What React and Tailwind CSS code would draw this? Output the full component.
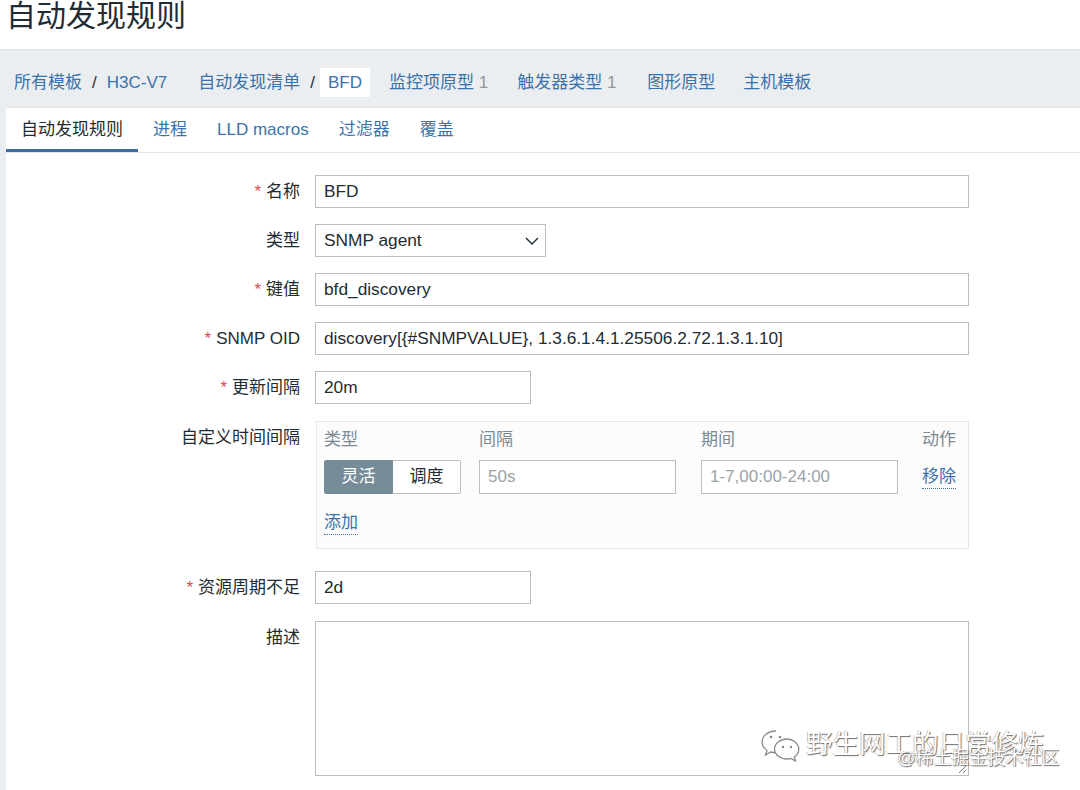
const labelW = "w-[309px] shrink-0 text-right h-[33px] leading-[33px] pr-[15px] text-[#1f2c33]";
const inputBox = "h-[33px] border border-[#bdbdbd] bg-white pl-[8px] flex items-center text-[#1f2c33] text-[17.3px]";

function Req() {
  return <span className="text-[#d64e4e] mr-[5px]">*</span>;
}

function Row({ label, req, children, className = "" }) {
  return (
    <div className={`flex items-start ${className}`}>
      <div className={labelW}>
        {req && <Req />}
        {label}
      </div>
      {children}
    </div>
  );
}

function Sep({ className = "mx-[10px]" }) {
  return <span className={`text-[#1f2c33] ${className}`}>/</span>;
}

function Watermark() {
  return (
    <div className="absolute left-[760px] top-[726px] w-[320px] h-[50px] pointer-events-none">
      <svg className="absolute left-0 top-[2px]" width="42" height="34" viewBox="0 0 42 34">
        <path d="M16 3c-8 0-14 5-14 11 0 3.5 2 6.5 5 8.5l-1.5 4.5 5.5-3c1.5.4 3 .6 5 .6" fill="white" stroke="#8a8a8a" strokeWidth="1.3" />
        <path d="M27 11c-7 0-12.5 4.5-12.5 10s5.5 10 12.5 10c1.4 0 2.7-.2 4-.6l4.5 2.6-1.2-4c2.8-1.8 4.5-4.6 4.5-8 0-5.5-5.8-10-11.8-10z" fill="white" stroke="#8a8a8a" strokeWidth="1.3" />
        <circle cx="11" cy="9" r="1.3" fill="#8a8a8a" />
        <circle cx="20" cy="9" r="1.3" fill="#8a8a8a" />
        <circle cx="23" cy="19" r="1.2" fill="#8a8a8a" />
        <circle cx="31" cy="19" r="1.2" fill="#8a8a8a" />
      </svg>
      <div className="absolute left-[46px] top-[2px] text-[26.5px] leading-[32px] text-white whitespace-nowrap [text-shadow:1px_1px_1px_#6f6f6f,-0.5px_-0.5px_0_#9a9a9a]">
        野生网工的日常修炼
      </div>
      <div className="absolute left-[137px] top-[21px] text-[18px] leading-[22px] text-white whitespace-nowrap [text-shadow:1px_1px_1px_#6f6f6f,-0.5px_-0.5px_0_#9a9a9a]">
        @稀土掘金技术社区
      </div>
    </div>
  );
}

export default function App() {
  return (
    <div className="relative w-[1080px] h-[790px] overflow-hidden bg-white text-[17px] font-['Liberation_Sans','Noto_Sans_CJK_SC',sans-serif]">
      {/* page title */}
      <div className="h-[48px] pl-[6px]">
        <h1 className="text-[30px] leading-[30px] mt-[1px] text-[#1f2c33]">自动发现规则</h1>
      </div>

      <div className="bg-[#ebeef0] border-t border-[#dfe2e4] h-[742px]">
        {/* breadcrumbs */}
        <div className="h-[57px] pt-[18px] pl-[14px]">
          <div className="flex items-center h-[29px] text-[#3a72ab] whitespace-nowrap">
            <span>所有模板</span>
            <Sep />
            <span>H3C-V7</span>
            <span className="ml-[31px]">自动发现清单</span>
            <Sep className="ml-[10px] mr-[5px]" />
            <span className="bg-white h-[29px] leading-[29px] px-[8px]">BFD</span>
            <span className="ml-[19px]">监控项原型 <span className="text-[#8f989e]">1</span></span>
            <span className="ml-[29px]">触发器类型 <span className="text-[#8f989e]">1</span></span>
            <span className="ml-[31px]">图形原型</span>
            <span className="ml-[28px]">主机模板</span>
          </div>
        </div>

        {/* card */}
        <div className="ml-[6px] bg-white h-[700px] border-t border-[#e3e6e8]">
          <div className="flex h-[44px] border-b border-[#e6e6e6] box-content">
            <div className="px-[15px] flex items-center text-[#1f2c33] border-b-[3px] border-[#3a6ea5] pt-[3px]">自动发现规则</div>
            <div className="px-[15px] flex items-center text-[#3a72ab]">进程</div>
            <div className="px-[15px] flex items-center text-[#3a72ab]">LLD macros</div>
            <div className="px-[15px] flex items-center text-[#3a72ab]">过滤器</div>
            <div className="px-[15px] flex items-center text-[#3a72ab]">覆盖</div>
          </div>

          <div className="pt-[22px] flex flex-col">
            <Row label="名称" req>
              <div className={`${inputBox} w-[654px]`}>BFD</div>
            </Row>
            <Row label="类型" className="mt-[16px]">
              <div className={`${inputBox} w-[231px] justify-between pr-[6px] pl-[7px]`}>
                <span>SNMP agent</span>
                <svg width="14" height="8" viewBox="0 0 14 8" fill="none">
                  <polyline points="1,1 7,7 13,1" stroke="#1f2c33" strokeWidth="1.4" />
                </svg>
              </div>
            </Row>
            <Row label="键值" req className="mt-[16px]">
              <div className={`${inputBox} w-[654px]`}>bfd_discovery</div>
            </Row>
            <Row label="SNMP OID" req className="mt-[16px]">
              <div className={`${inputBox} w-[654px]`}>discovery[{"{#SNMPVALUE}"}, 1.3.6.1.4.1.25506.2.72.1.3.1.10]</div>
            </Row>
            <Row label="更新间隔" req className="mt-[16px]">
              <div className={`${inputBox} w-[216px]`}>20m</div>
            </Row>

            <Row label="自定义时间间隔" className="mt-[17px]">
              <div className="ml-px w-[653px] h-[128px] border border-[#e8e8e8] bg-[#fcfcfc] pl-[7px] pt-[7px]">
                <div className="grid grid-cols-[155px_222px_221px_auto] text-[#7b8a93] leading-[22px]">
                  <span>类型</span>
                  <span>间隔</span>
                  <span>期间</span>
                  <span>动作</span>
                </div>
                <div className="grid grid-cols-[155px_222px_221px_auto] mt-[9px] items-center">
                  <div className="flex h-[34px]">
                    <div className="w-[69px] bg-[#768d99] text-white flex items-center justify-center rounded-l-[2px] border border-[#768d99]">灵活</div>
                    <div className="w-[68px] bg-white text-[#1f2c33] flex items-center justify-center rounded-r-[2px] border border-l-0 border-[#bdbdbd]">调度</div>
                  </div>
                  <div className="w-[197px] h-[34px] border border-[#bdbdbd] bg-white pl-[8px] flex items-center text-[#9aa3a8]">50s</div>
                  <div className="w-[197px] h-[34px] border border-[#bdbdbd] bg-white pl-[8px] flex items-center text-[#9aa3a8]">1-7,00:00-24:00</div>
                  <span className="text-[#3a72ab] leading-[22px] border-b border-dotted border-[#3a72ab] w-fit">移除</span>
                </div>
                <div className="mt-[16px]">
                  <span className="text-[#3a72ab] leading-[22px] border-b border-dotted border-[#3a72ab] inline-block">添加</span>
                </div>
              </div>
            </Row>

            <Row label="资源周期不足" req className="mt-[22px]">
              <div className={`${inputBox} w-[216px]`}>2d</div>
            </Row>
            <Row label="描述" className="mt-[17px]">
              <div className="relative w-[654px] h-[155px] border border-[#bdbdbd] bg-white">
                <svg className="absolute right-[1px] bottom-[1px]" width="9" height="9" viewBox="0 0 9 9">
                  <line x1="1" y1="8" x2="8" y2="1" stroke="#777" strokeWidth="1" />
                  <line x1="5" y1="8" x2="8" y2="5" stroke="#777" strokeWidth="1" />
                </svg>
              </div>
            </Row>
          </div>
        </div>
      </div>

      <Watermark />
    </div>
  );
}
